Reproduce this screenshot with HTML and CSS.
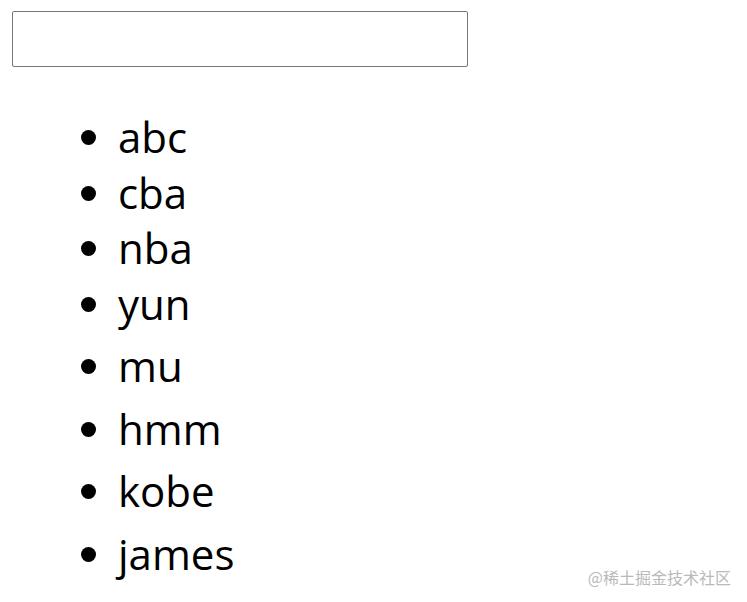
FILE: index.html
```html
<!DOCTYPE html>
<html lang="zh">
<head>
<meta charset="utf-8">
<link rel="stylesheet" href="styles.css">
</head>
<body>
<div class="page">
  <input class="search" type="text">
  <ul class="list">
    <li>abc</li>
    <li>cba</li>
    <li>nba</li>
    <li>yun</li>
    <li class="added">mu</li>
    <li class="added">hmm</li>
    <li class="added">kobe</li>
    <li class="added">james</li>
  </ul>
</div>
<div class="watermark">@稀土掘金技术社区</div>
</body>
</html>
```

FILE: styles.css
```css
html, body {
  margin: 0;
  padding: 0;
  background: #fff;
}
body {
  width: 747px;
  height: 602px;
  overflow: hidden;
  position: relative;
  font-family: "Open Sans", "Noto Sans", sans-serif;
}
.page {
  padding: 11px 12px 0;
  display: flex;
  flex-direction: column;
  align-items: flex-start;
}
.search {
  width: 456px;
  height: 56px;
  box-sizing: border-box;
  border: 1px solid #767676;
  border-radius: 2px;
  margin: 0;
  padding: 0 4px;
  outline: none;
  font-size: 20px;
}
.list {
  margin: 42px 0 0;
  padding: 0 0 0 106px;
  font-size: 42px;
  line-height: 55.5px;
  color: #000;
}
.list li.added {
  margin-top: 7px;
}
.watermark {
  position: absolute;
  right: 16px;
  bottom: 15px;
  font-family: "Noto Sans CJK SC", sans-serif;
  font-size: 16px;
  color: #bababa;
  line-height: 20px;
}
```
